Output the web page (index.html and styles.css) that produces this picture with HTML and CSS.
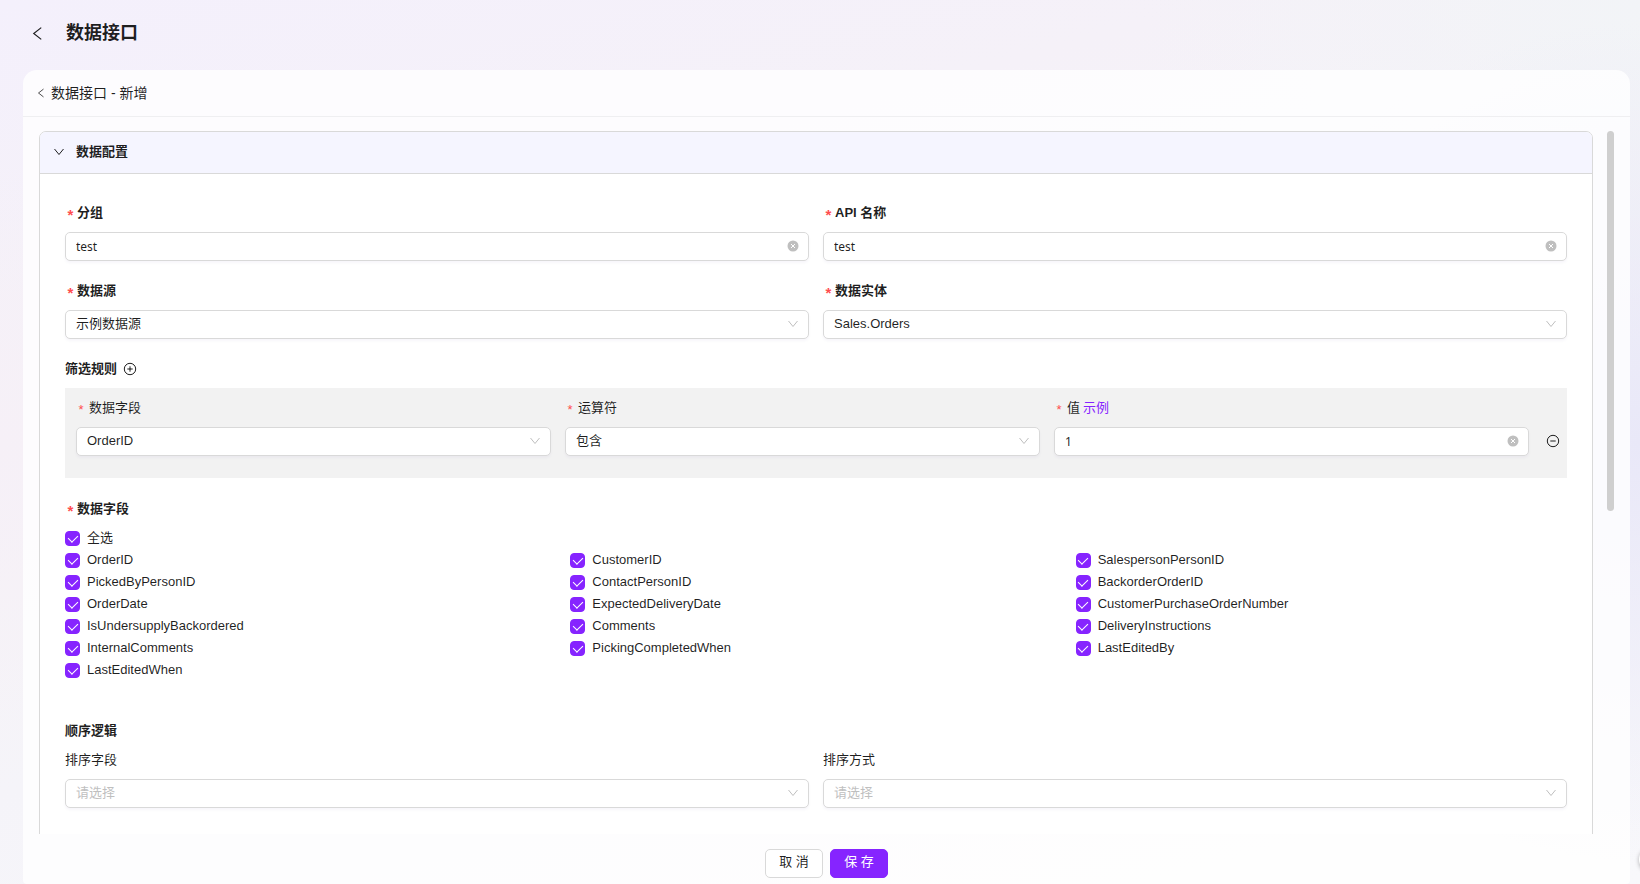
FILE: index.html
```html
<!DOCTYPE html>
<html lang="zh-CN">
<head>
  <meta charset="utf-8">
  <title>数据接口</title>
  <link rel="stylesheet" href="styles.css">
</head>
<body>
  <svg class="defs" width="0" height="0">
    <symbol id="left" viewBox="0 0 14 14"><path d="M10.500 1.500 3.500 7l7 5.500" fill="none" stroke="currentColor" stroke-width="1.100"/></symbol>
    <symbol id="down" viewBox="0 0 12 12"><path d="M1.500 3 6 8.500 10.500 3" fill="none" stroke="currentColor" stroke-width="1"/></symbol>
    <symbol id="clear" viewBox="0 0 12 12"><circle cx="6" cy="6" r="5.500" fill="currentColor"/><path d="M4 4l4 4M8 4l-4 4" stroke="#fff" stroke-width="1"/></symbol>
    <symbol id="plus" viewBox="0 0 14 14"><circle cx="7" cy="7" r="5.700" fill="none" stroke="currentColor"/><path d="M4.300 7h5.400M7 4.300v5.400" stroke="currentColor"/></symbol>
    <symbol id="minus" viewBox="0 0 14 14"><circle cx="7" cy="7" r="5.700" fill="none" stroke="currentColor"/><path d="M4.300 7h5.400" stroke="currentColor"/></symbol>
  </svg>

  <div class="page">
    <header class="page-header">
      <button class="icon-btn" aria-label="返回"><svg class="icon-back"><use href="#left"/></svg></button>
      <h1>数据接口</h1>
    </header>

    <main class="card">
      <div class="card-header">
        <button class="icon-btn" aria-label="返回列表"><svg class="icon-small"><use href="#left"/></svg></button>
        <h2>数据接口 - 新增</h2>
      </div>

      <div class="scroller">
        <div class="viewport">
          <section class="panel">
            <button class="panel-header" aria-expanded="true">
              <svg class="icon"><use href="#down"/></svg>
              <span>数据配置</span>
            </button>

            <form class="panel-body" id="api-form">
              <div class="row">
                <div class="field">
                  <label class="bold required" for="group">分组</label>
                  <div class="control">
                    <input type="text" id="group" value="test">
                    <svg class="suffix"><use href="#clear"/></svg>
                  </div>
                </div>
                <div class="field">
                  <label class="bold required" for="api-name">API 名称</label>
                  <div class="control">
                    <input type="text" id="api-name" value="test">
                    <svg class="suffix"><use href="#clear"/></svg>
                  </div>
                </div>
                <div class="field">
                  <label class="bold required" for="source">数据源</label>
                  <div class="control">
                    <select id="source"><option>示例数据源</option></select>
                    <svg class="suffix"><use href="#down"/></svg>
                  </div>
                </div>
                <div class="field">
                  <label class="bold required" for="entity">数据实体</label>
                  <div class="control">
                    <select id="entity"><option>Sales.Orders</option></select>
                    <svg class="suffix"><use href="#down"/></svg>
                  </div>
                </div>
              </div>

              <div class="section-title">
                <h3>筛选规则</h3>
                <button type="button" class="icon-btn" aria-label="添加规则"><svg class="icon-round"><use href="#plus"/></svg></button>
              </div>
              <div class="rule">
                <div class="rule-fields">
                  <div class="field">
                    <label class="required" for="rule-field">数据字段</label>
                    <div class="control">
                      <select id="rule-field"><option>OrderID</option></select>
                      <svg class="suffix"><use href="#down"/></svg>
                    </div>
                  </div>
                  <div class="field">
                    <label class="required" for="rule-op">运算符</label>
                    <div class="control">
                      <select id="rule-op"><option>包含</option></select>
                      <svg class="suffix"><use href="#down"/></svg>
                    </div>
                  </div>
                  <div class="field">
                    <div class="label-line"><label class="required" for="rule-value">值</label><a href="#">示例</a></div>
                    <div class="control">
                      <input type="text" id="rule-value" value="1">
                      <svg class="suffix"><use href="#clear"/></svg>
                    </div>
                  </div>
                </div>
                <button type="button" class="icon-btn rule-remove" aria-label="删除规则"><svg class="icon-round"><use href="#minus"/></svg></button>
              </div>

              <fieldset class="columns">
                <legend class="bold required">数据字段</legend>
                <label class="check"><input type="checkbox" checked>全选</label>
                <div class="check-grid">
                  <label class="check"><input type="checkbox" checked>OrderID</label>
                  <label class="check"><input type="checkbox" checked>CustomerID</label>
                  <label class="check"><input type="checkbox" checked>SalespersonPersonID</label>
                  <label class="check"><input type="checkbox" checked>PickedByPersonID</label>
                  <label class="check"><input type="checkbox" checked>ContactPersonID</label>
                  <label class="check"><input type="checkbox" checked>BackorderOrderID</label>
                  <label class="check"><input type="checkbox" checked>OrderDate</label>
                  <label class="check"><input type="checkbox" checked>ExpectedDeliveryDate</label>
                  <label class="check"><input type="checkbox" checked>CustomerPurchaseOrderNumber</label>
                  <label class="check"><input type="checkbox" checked>IsUndersupplyBackordered</label>
                  <label class="check"><input type="checkbox" checked>Comments</label>
                  <label class="check"><input type="checkbox" checked>DeliveryInstructions</label>
                  <label class="check"><input type="checkbox" checked>InternalComments</label>
                  <label class="check"><input type="checkbox" checked>PickingCompletedWhen</label>
                  <label class="check"><input type="checkbox" checked>LastEditedBy</label>
                  <label class="check"><input type="checkbox" checked>LastEditedWhen</label>
                </div>
              </fieldset>

              <div class="section-title">
                <h3>顺序逻辑</h3>
              </div>
              <div class="row">
                <div class="field">
                  <label for="sort-field">排序字段</label>
                  <div class="control">
                    <select id="sort-field" class="empty"><option>请选择</option></select>
                    <svg class="suffix"><use href="#down"/></svg>
                  </div>
                </div>
                <div class="field">
                  <label for="sort-order">排序方式</label>
                  <div class="control">
                    <select id="sort-order" class="empty"><option>请选择</option></select>
                    <svg class="suffix"><use href="#down"/></svg>
                  </div>
                </div>
              </div>
            </form>
          </section>
        </div>
        <div class="scrollbar"><div class="thumb"></div></div>
      </div>

      <footer class="actions">
        <button class="btn">取 消</button>
        <button class="btn primary" form="api-form">保 存</button>
      </footer>
    </main>
  </div>
  <div class="float-ball"></div>
</body>
</html>
```
FILE: styles.css
```css
* {
  margin: 0;
  padding: 0;
  box-sizing: border-box;
}

body {
  font: 13px/20px "Liberation Sans", "Noto Sans CJK SC", sans-serif;
  color: rgba(0, 0, 0, 0.88);
  background:
    radial-gradient(circle at 0 50%, #f6f0f7 0, rgba(246, 240, 247, 0) 280px),
    radial-gradient(circle at 100% 50%, #e9e8f8 0, rgba(233, 232, 248, 0) 420px),
    radial-gradient(circle at 100% 0, #f2f4f7 0, rgba(242, 244, 247, 0) 500px),
    linear-gradient(165deg, #f4f0fc 0%, #f5f1f8 25%, #f6f3f7 45%, #f5f4f9 60%, #f8f8fb 100%);
  overflow: hidden;
}

button, input, select {
  font: inherit;
  color: inherit;
}

button {
  cursor: pointer;
}

h1, h2, h3, legend {
  font-size: 13px;
}

.defs {
  position: absolute;
}

.page {
  display: flex;
  flex-direction: column;
  height: 100vh;
  padding: 0 10px 0 23px;
}

.page-header {
  display: flex;
  align-items: center;
  gap: 21px;
  height: 70px;
  padding: 0 0 4px 7px;
}

.page-header h1 {
  font-size: 18px;
  line-height: 26px;
}

.icon-btn {
  display: flex;
  border: none;
  background: none;
}

.icon-back {
  width: 15px;
  height: 15px;
}

.icon-small {
  width: 10px;
  height: 10px;
}

.icon {
  width: 12px;
  height: 12px;
}

.icon-round {
  width: 14px;
  height: 14px;
}

.card {
  flex: 1;
  display: flex;
  flex-direction: column;
  min-height: 0;
  border-radius: 14px 14px 4px 4px;
  background: rgba(255, 255, 255, 0.8);
}

.card-header {
  display: flex;
  align-items: center;
  gap: 5px;
  height: 47px;
  padding-left: 13px;
  border-bottom: 1px solid #efeff1;
}

.card-header h2 {
  font-size: 14px;
  font-weight: 400;
}

/* scroll area */
.scroller {
  flex: 1;
  display: flex;
  gap: 14px;
  min-height: 0;
  padding: 14px 16px 0;
}

.viewport {
  flex: 1;
  overflow: hidden;
}

.scrollbar {
  width: 7px;
}

.thumb {
  height: 54%;
  border-radius: 4px;
  background: #cfcfcf;
}

.panel {
  min-height: 1304px;
  border: 1px solid #d9d9d9;
  border-radius: 7px;
  background: #fff;
  overflow: hidden;
}

.panel-header {
  display: flex;
  align-items: center;
  gap: 11px;
  width: 100%;
  height: 42px;
  padding: 0 13px 2px;
  border: none;
  border-bottom: 1px solid #d9d9d9;
  background: #f5f5ff;
  font-weight: 700;
}

.panel-body {
  padding: 29px 25px;
}

.row, .rule-fields {
  display: grid;
  grid-template-columns: repeat(2, 1fr);
  gap: 20px 14px;
}

.field {
  display: flex;
  flex-direction: column;
  gap: 9px;
}

.bold {
  font-weight: 700;
}

.required {
  display: flex;
}

.required::before {
  content: "*";
  width: 11px;
  padding-top: 2px;
  padding-right: 1px;
  text-align: center;
  font-size: 15px;
  color: #ff4d4f;
}

.label-line {
  display: flex;
  gap: 3px;
}

a {
  color: #8624ff;
  text-decoration: none;
}

.control {
  position: relative;
  display: flex;
}

.control input, .control select {
  width: 100%;
  height: 29px;
  padding: 0 28px 0 10px;
  border: 1px solid #d9d9d9;
  border-radius: 5px;
  background: #fff;
  box-shadow: 0 2px 3px rgba(60, 20, 120, 0.04);
  appearance: none;
  outline: none;
}

.control input {
  font-family: "Noto Sans", "Noto Sans CJK SC", sans-serif;
  font-size: 12px;
}

.control select {
  padding-bottom: 2px;
}

.control .empty {
  color: #bfbfbf;
}

.suffix {
  position: absolute;
  top: 8px;
  right: 10px;
  width: 12px;
  height: 12px;
  color: #bfbfbf;
  pointer-events: none;
}

.section-title {
  display: flex;
  align-items: center;
  gap: 6px;
  margin: 20px 0 9px;
}

/* filter rule */
.rule {
  display: flex;
  align-items: center;
  gap: 17px;
  padding: 10px 7px 22px 11px;
  background: #f2f2f2;
}

.rule-fields {
  flex: 1;
  grid-template-columns: repeat(3, 1fr);
}

.rule-fields .required::before {
  width: 10px;
  padding-right: 3px;
  font-size: 13px;
}

.rule-remove {
  padding-top: 27px;
}

.columns {
  margin: 21px 0 40px;
  border: none;
}

.columns legend {
  height: 20px;
  margin-bottom: 8px;
}

.check-grid {
  display: grid;
  grid-template-columns: repeat(3, 1fr);
  column-gap: 14px;
}

.check {
  display: flex;
  align-items: center;
  gap: 7px;
  height: 22px;
}

.field label {
  height: 20px;
}

.check input {
  display: grid;
  place-items: center;
  width: 15px;
  height: 15px;
  border-radius: 4px;
  appearance: none;
  background: #fff;
  border: 1px solid #d9d9d9;
}

.check input:checked {
  background: #8624ff;
  border-color: #8624ff;
}

.check input:checked::after {
  content: "";
  width: 5px;
  height: 8px;
  margin-bottom: 2px;
  border: solid #fff;
  border-width: 0 1px 1px 0;
  transform: rotate(45deg);
}

/* footer */
.actions {
  display: flex;
  justify-content: center;
  gap: 7px;
  padding: 15px 0 6px;
}

.btn {
  width: 58px;
  height: 29px;
  padding-bottom: 4px;
  border: 1px solid #d9d9d9;
  border-radius: 5px;
  background: #fff;
}

.btn.primary {
  border-color: #8624ff;
  background: #8624ff;
  color: #fff;
}

.float-ball {
  position: fixed;
  right: -24px;
  bottom: 12px;
  width: 25px;
  height: 25px;
  border-radius: 50%;
  background: #fff;
  box-shadow: 0 1px 4px rgba(0, 0, 0, 0.3);
}
```
